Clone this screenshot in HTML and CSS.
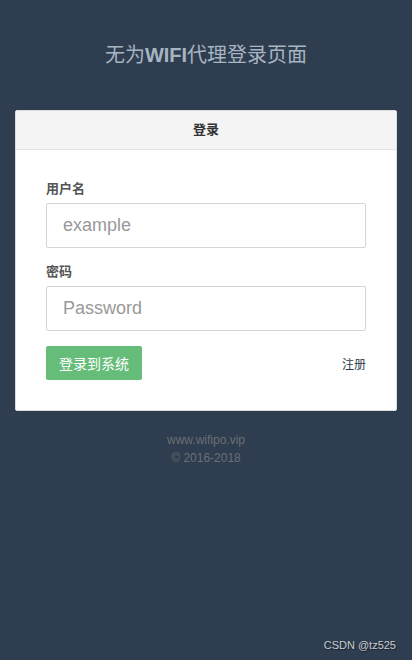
FILE: index.html
```html
<!DOCTYPE html>
<html lang="zh">
<head>
<meta charset="utf-8">
<title>无为WIFI代理登录页面</title>
<link rel="stylesheet" href="styles.css">
</head>
<body>
<div class="page">
  <h1 class="title">无为<b>WIFI</b>代理登录页面</h1>
  <div class="card">
    <div class="card-head">登录</div>
    <form class="card-body">
      <div class="group">
        <label class="label">用户名</label>
        <input class="input" type="text" placeholder="example">
      </div>
      <div class="group">
        <label class="label">密码</label>
        <input class="input" type="password" placeholder="Password">
      </div>
      <div class="actions">
        <button class="btn" type="button">登录到系统</button>
        <a class="register">注册</a>
      </div>
    </form>
  </div>
  <div class="footer">
    <div>www.wifipo.vip</div>
    <div>© 2016-2018</div>
  </div>
</div>
<div class="watermark">CSDN @tz525</div>
</body>
</html>
```
FILE: styles.css
```css
html, body {
  margin: 0;
  padding: 0;
}
body {
  background: #2e3d4f;
  min-height: 660px;
  font-family: "Liberation Sans", Arial, "Noto Sans CJK SC", sans-serif;
  position: relative;
}
.page {
  padding: 0 15px;
}
.title {
  margin: 0;
  padding-top: 41px;
  margin-bottom: 41px;
  height: 28px;
  line-height: 28px;
  font-size: 20px;
  font-weight: normal;
  color: #a7b4c1;
  text-align: center;
}
.title b {
  font-weight: bold;
}
.card {
  background: #fff;
  border: 1px solid #dcdcdc;
  border-radius: 2px;
}
.card-head {
  height: 38px;
  line-height: 38px;
  background: #f4f4f4;
  border-bottom: 1px solid #e3e3e3;
  text-align: center;
  font-size: 13px;
  font-weight: bold;
  color: #333;
}
.card-body {
  margin: 0;
  padding: 30px 30px 30px;
}
.group {
  margin-bottom: 15px;
}
.label {
  display: block;
  font-size: 13px;
  line-height: 18px;
  font-weight: bold;
  color: #555;
  margin-bottom: 5px;
}
.input {
  display: block;
  box-sizing: border-box;
  width: 100%;
  height: 45px;
  margin: 0;
  padding: 0 16px;
  border: 1px solid #d5d5d5;
  border-radius: 2px;
  font-family: "Liberation Sans", Arial, sans-serif;
  font-size: 18px;
  color: #555;
  background: #fff;
  outline: none;
}
.input::placeholder {
  color: #999;
}
.actions {
  display: flex;
  justify-content: space-between;
  align-items: center;
}
.btn {
  height: 34px;
  width: 96px;
  padding: 0;
  border: none;
  border-radius: 2px;
  background: #65bd79;
  color: #fff;
  font-family: "Liberation Sans", "Noto Sans CJK SC", sans-serif;
  font-size: 14px;
}
.register {
  font-size: 12px;
  color: #2b3a4a;
}
.footer {
  margin-top: 20px;
  text-align: center;
  font-size: 12px;
  line-height: 18px;
  color: #6b6f73;
}
.watermark {
  position: absolute;
  right: 16px;
  top: 637px;
  font-size: 11px;
  line-height: 16px;
  color: #c8ccd0;
  text-shadow: 1px 1px 1px #1a232d;
}
```
